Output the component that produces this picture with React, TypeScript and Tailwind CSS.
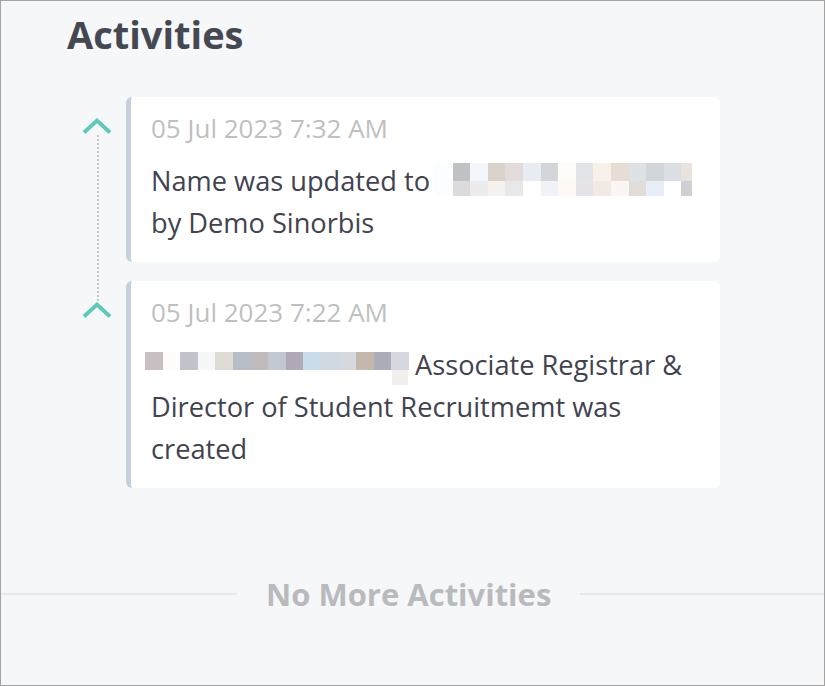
import React from "react";

const m1r1 = ["#fbfdfe","#c0c1c4","#f3f6fa","#d9d3cc","#e1dcd9","#e8ecf3","#d4d5d9","#fefcf8","#e1e4e8","#f8f1ea","#e6ddd5","#dde2e6","#d1d6da","#dbdfe3","#e8e3df"];
const m1r2 = ["#fbfdfe","#dcdadb","#ececec","#f6f1ec","#e7e8ea","#ffffff","#eff2f7","#fef9f5","#e6e4e8","#f1e9e3","#fbf6f3","#e0dcd8","#e8eef6","#ffffff","#ced0d5"];
const m2r1 = ["#c8bfc2","#fdfcfb","#c1c5cb","#f5f8f7","#dfdcd5","#b5bec7","#c0bbbb","#c1c8cf","#aea8b7","#c8dcea","#d0d9e1","#d5d8dc","#c4b8ac","#adadb9","#d5d9df"];

function Row({ colors, h, lastW }: { colors: string[]; h: string; lastW?: number }) {
  return (
    <span className={`flex ${h}`}>
      {colors.map((c, i) => (
        <span
          key={i}
          className="block h-full shrink-0"
          style={{ backgroundColor: c, width: i === colors.length - 1 && lastW ? lastW : 17.6 }}
        />
      ))}
    </span>
  );
}

function Chevron() {
  return (
    <svg width="30" height="16" viewBox="0 0 30 16" fill="none">
      <path d="M2 14.5 L15 2.5 L28 14.5" stroke="#5ccab9" strokeWidth="3.8" strokeLinecap="butt" strokeLinejoin="miter" />
    </svg>
  );
}

export default function App() {
  return (
    <div
      className="w-[825px] h-[686px] border border-[#a3a3a3] bg-[#f6f7f9] overflow-hidden flex flex-col"
      style={{ fontFamily: '"Open Sans", "Noto Sans", sans-serif' }}
    >
      <div className="pl-[66px] pt-[11px]">
        <h1 className="text-[38px] leading-[44px] font-bold text-[#454850]">Activities</h1>
      </div>

      <div className="pl-[66px] mt-[41px] flex flex-col gap-[19px]">
        {/* Card 1 */}
        <div className="flex">
          <div className="w-[59px] shrink-0 relative flex justify-center pt-[21px]">
            <div className="h-[16px]"><Chevron /></div>
            <div className="absolute left-[29.5px] top-[38px] h-[166px] border-l-2 border-dotted border-[#c4c4c4]" />
          </div>
          <div className="w-[594px] bg-white rounded-[6px] border-l-[5px] border-[#c4d0dc] pl-[20px] pr-[20px] pt-[13px] pb-[18px]">
            <div className="text-[26px] leading-[36px] text-[#bfbfbf]">05 Jul 2023 7:32 AM</div>
            <div className="mt-[14px] text-[27.2px] leading-[42px] text-[#41434f]">
              Name was updated to{" "}
              <span className="inline-block align-top mt-[3px] h-[33px] w-[258px] ml-[-2px]">
                <Row colors={m1r1} h="h-[18px]" lastW={11} />
                <Row colors={m1r2} h="h-[15px]" lastW={11} />
              </span>{" "}
              by Demo Sinorbis
            </div>
          </div>
        </div>

        {/* Card 2 */}
        <div className="flex">
          <div className="w-[59px] shrink-0 flex justify-center pt-[21px]">
            <div className="h-[16px]"><Chevron /></div>
          </div>
          <div className="w-[594px] bg-white rounded-[6px] border-l-[5px] border-[#c4d0dc] pl-[20px] pr-[20px] pt-[13px] pb-[18px]">
            <div className="text-[26px] leading-[36px] text-[#bfbfbf]">05 Jul 2023 7:22 AM</div>
            <div className="mt-[14px] text-[27.2px] leading-[42px] text-[#41434f]">
              <span className="inline-block align-top mt-[8px] h-[30px] w-[263px] ml-[-6px]">
                <Row colors={m2r1} h="h-[18px]" />
                <span className="flex h-[15px] justify-end">
                  <span className="block h-full w-[16px] bg-[#f3efed]" />
                </span>
              </span>{" "}
              Associate Registrar &amp; Director of Student Recruitmemt was created
            </div>
          </div>
        </div>
      </div>

      <div className="mt-[85px] flex items-center">
        <div className="w-[236px] h-[2px] bg-[#e6e8eb]" />
        <div className="ml-[29px] mr-[29px] text-[31px] leading-[42px] font-bold text-[#b9babd] whitespace-nowrap">No More Activities</div>
        <div className="flex-1 h-[2px] bg-[#e6e8eb]" />
      </div>
    </div>
  );
}
